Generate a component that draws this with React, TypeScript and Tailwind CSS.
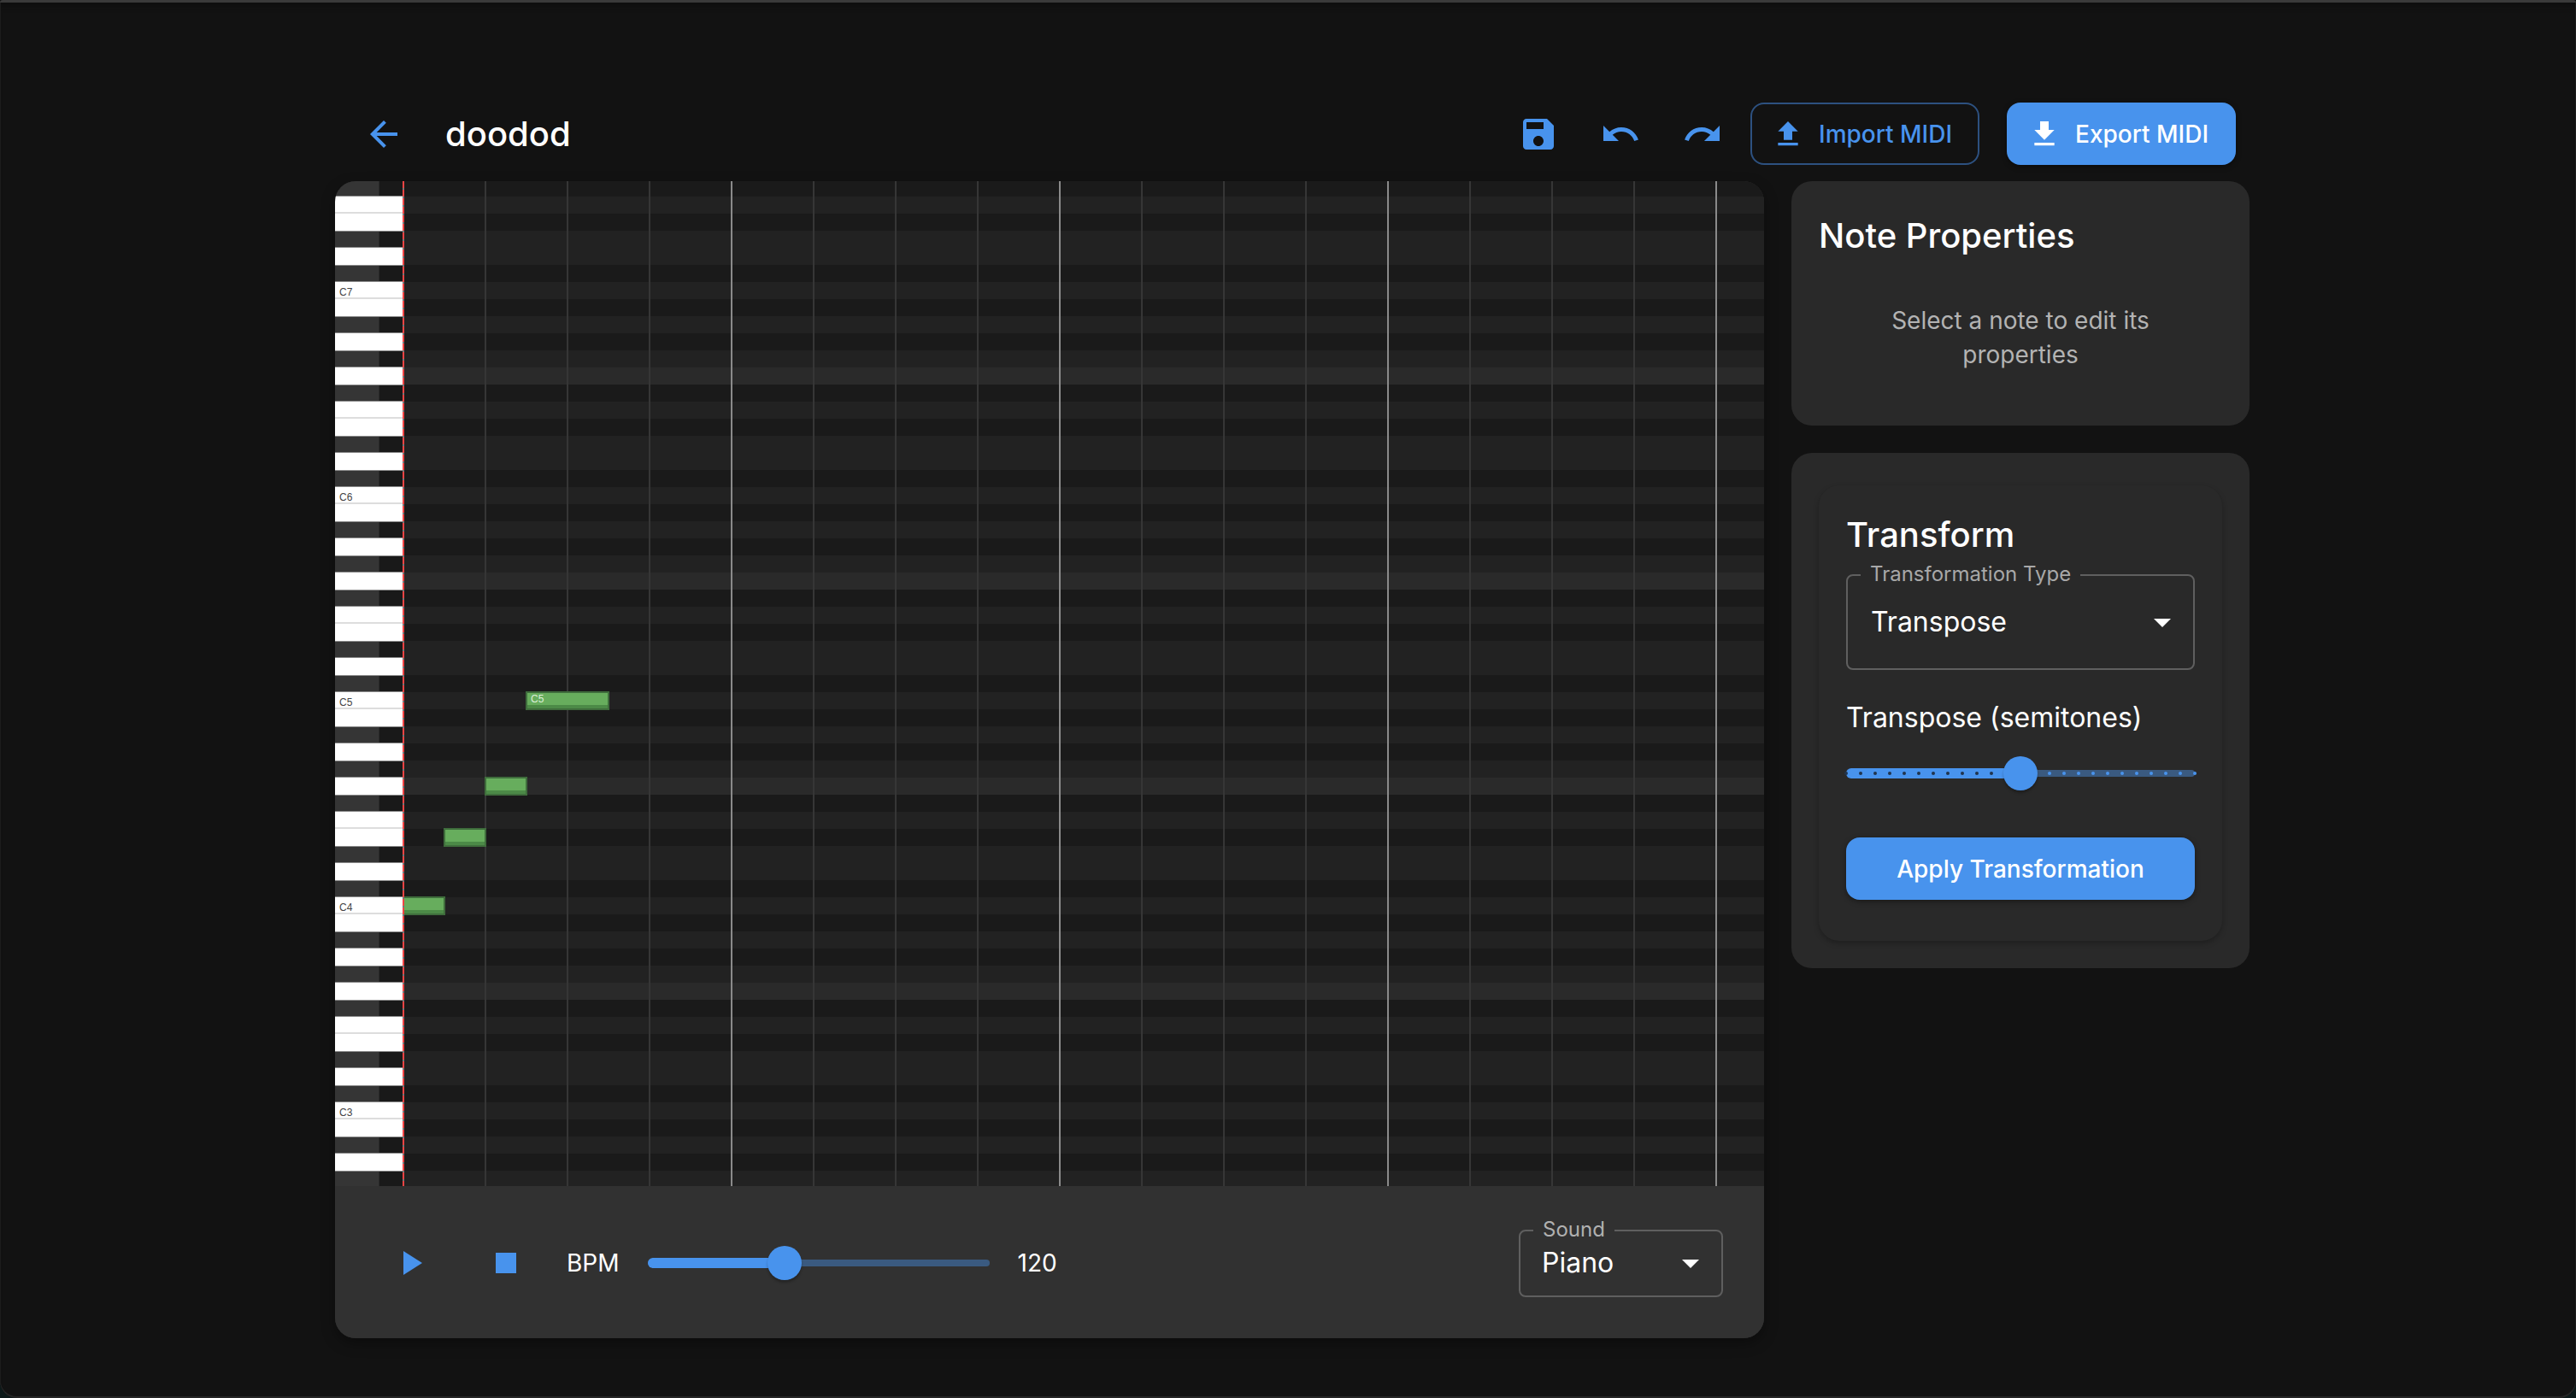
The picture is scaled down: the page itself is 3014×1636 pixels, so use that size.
import React from "react";

function Icon({ d, className = "w-[48px] h-[48px]" }: { d: string; className?: string }) {
  return (
    <svg viewBox="0 0 24 24" className={`shrink-0 ${className}`} fill="currentColor">
      <path d={d} />
    </svg>
  );
}

const P = {
  back: "M20 11H7.83l5.59-5.59L12 4l-8 8 8 8 1.41-1.41L7.83 13H20v-2z",
  save: "M17 3H5c-1.11 0-2 .9-2 2v14c0 1.1.89 2 2 2h14c1.1 0 2-.9 2-2V7l-4-4zm-5 16c-1.66 0-3-1.34-3-3s1.34-3 3-3 3 1.34 3 3-1.34 3-3 3zm3-10H5V5h10v4z",
  undo: "M12.5 8c-2.65 0-5.05.99-6.9 2.6L2 7v9h9l-3.62-3.62c1.39-1.16 3.16-1.88 5.12-1.88 3.54 0 6.55 2.31 7.6 5.5l2.37-.78C21.08 11.03 17.15 8 12.5 8z",
  redo: "M18.4 10.6C16.55 8.99 14.15 8 11.5 8c-4.65 0-8.58 3.03-9.96 7.22L3.9 16c1.05-3.19 4.05-5.5 7.6-5.5 1.95 0 3.73.72 5.12 1.88L13 16h9V7l-3.6 3.6z",
  upload: "M9 16h6v-6h4l-7-7-7 7h4zm-4 2h14v2H5z",
  download: "M19 9h-4V3H9v6H5l7 7 7-7zM5 18v2h14v-2H5z",
  play: "M8 5v14l11-7z",
  stop: "M6 6h12v12H6z",
  drop: "M7 10l5 5 5-5z",
};

function IconBtn({ d }: { d: string }) {
  return (
    <button className="w-[96px] h-[96px] flex items-center justify-center text-[#4893ed] shrink-0">
      <Icon d={d} />
    </button>
  );
}

const BLACK = [1, 3, 6, 8, 10];
// lane colours per pitch class
const LANE: Record<number, string> = {
  0: "bg-[#222222]",
  1: "bg-[#1a1a1a]",
  2: "bg-[#222222]",
  3: "bg-[#222222]",
  4: "bg-[#1a1a1a]",
  5: "bg-[#222222]",
  6: "bg-[#1a1a1a]",
  7: "bg-[#2a2a2a]",
  8: "bg-[#222222]",
  9: "bg-[#1a1a1a]",
  10: "bg-[#222222]",
  11: "bg-[#1a1a1a]",
};

function Row({ pitch }: { pitch: number }) {
  const pc = pitch % 12;
  const isBlack = BLACK.includes(pc);
  const label = pc === 0 ? `C${pitch / 12 - 1}` : "";
  const needsLine = pc === 0 || pc === 5;
  return (
    <div className="flex h-[20px] shrink-0">
      {isBlack ? (
        <div className="w-[80px] h-[20px] box-border bg-[#191919] border-y border-[#8a8a8a] flex shrink-0">
          <div className="w-[52px] h-full bg-[#353535] shadow-[inset_-1px_0_0_#2a2a2a]" />
        </div>
      ) : (
        <div
          className={`w-[80px] h-[20px] box-border bg-white shrink-0 pl-[5px] pt-[5px] flex items-center font-['Liberation_Sans',sans-serif] text-[12px] leading-none text-[#444444] ${
            needsLine ? "border-b-2 border-[#dddddd]" : ""
          }`}
        >
          {label}
        </div>
      )}
      <div className={`flex-1 ${LANE[pc]}`} />
    </div>
  );
}

const pitches = Array.from({ length: 60 }, (_, i) => 102 - i);
const gridLines = Array.from({ length: 16 }, (_, i) => i + 1);
const notes = [
  { x: 472, y: 1050, w: 48, label: "" },
  { x: 520, y: 970, w: 48, label: "" },
  { x: 568, y: 910, w: 48, label: "" },
  { x: 616, y: 810, w: 96, label: "C5" },
];

function PianoRoll() {
  return (
    <div className="relative h-[1176px] overflow-hidden">
      <div className="flex flex-col -mt-[2px]">
        {pitches.map((p) => (
          <Row key={p} pitch={p} />
        ))}
      </div>
      {gridLines.map((i) => (
        <div
          key={i}
          className={`absolute top-0 bottom-0 w-[2px] ${i % 4 === 0 ? "bg-[#8a8a8a]" : "bg-[#363636]"}`}
          style={{ left: 80 + i * 96 - 1 }}
        />
      ))}
      {notes.map((n) => (
        <div
          key={n.x}
          className="absolute h-[22px] box-border border-2 border-[#3f6d3c] bg-[#67ad5d] shadow-[inset_0_-4px_0_#4c8a47] text-[12px] leading-none text-[#dcefd9] font-['Liberation_Sans',sans-serif] pl-[4px] pt-[1px]"
          style={{ left: n.x - 1 - 392, top: n.y - 1 - 212, width: n.w + 2 }}
        >
          {n.label}
        </div>
      ))}
      <div className="absolute top-0 bottom-0 left-[79px] w-[2px] bg-[repeating-linear-gradient(to_bottom,#ef4444_0px,#ef4444_8px,#777777_8px,#777777_10px)]" />
    </div>
  );
}

function BpmSlider() {
  const pct = 0.4;
  return (
    <div className="relative w-[400px] h-[40px] shrink-0">
      <div className="absolute left-0 right-0 top-[16px] h-[8px] rounded-full bg-[#3a5a80]" />
      <div
        className="absolute left-0 top-[14px] h-[12px] rounded-full bg-[#4893ed]"
        style={{ width: `${pct * 100}%` }}
      />
      <div
        className="absolute top-0 w-[40px] h-[40px] rounded-full bg-[#4893ed] shadow-[0_3px_3px_rgba(0,0,0,0.25)] -translate-x-1/2"
        style={{ left: `${pct * 100}%` }}
      />
    </div>
  );
}

function TransposeSlider() {
  const marks = Array.from({ length: 25 }, (_, i) => i);
  return (
    <div className="relative w-[408px] h-[40px] mt-[21px]">
      <div className="absolute left-0 right-0 top-[16px] h-[8px] rounded-full bg-[#3a5a80]" />
      <div className="absolute left-0 top-[14px] h-[12px] w-[204px] rounded-full bg-[#4893ed]" />
      {marks.map((i) => (
        <div
          key={i}
          className={`absolute top-[18px] w-[4px] h-[4px] rounded-full ${i <= 12 ? "bg-[#20344d]" : "bg-[#4893ed]"}`}
          style={{ left: i * 17 - 2 }}
        />
      ))}
      <div className="absolute left-[204px] top-0 w-[40px] h-[40px] rounded-full bg-[#4893ed] shadow-[0_3px_3px_rgba(0,0,0,0.25)] -translate-x-1/2" />
    </div>
  );
}

function SoundSelect() {
  return (
    <div className="relative w-[239px] h-[79px] box-border border-2 border-[#5f5f5f] rounded-[8px] flex items-center pl-[26px] pr-[12px] shrink-0">
      <span className="absolute left-[15px] -top-[17px] px-[11px] bg-[#313131] text-[24px] leading-[30px] text-[#b0b0b0]">
        Sound
      </span>
      <span className="text-[32px] leading-[40px] text-white flex-1 -ml-[1px]">Piano</span>
      <Icon d={P.drop} className="w-[48px] h-[48px] text-white" />
    </div>
  );
}

function TypeSelect() {
  return (
    <div className="relative w-[408px] h-[112px] mt-[22px] box-border border-2 border-[#5f5f5f] rounded-[8px] flex items-center pl-[27px] pr-[12px]">
      <span className="absolute left-[15px] -top-[17px] px-[11px] bg-[#292929] text-[24px] leading-[30px] text-[#a8a8a8]">
        Transformation Type
      </span>
      <span className="text-[32px] leading-[40px] text-white flex-1">Transpose</span>
      <Icon d={P.drop} className="w-[48px] h-[48px] text-white" />
    </div>
  );
}

export default function App() {
  return (
    <div className="w-[3014px] h-[1636px] bg-[#0d1a1a] flex flex-col overflow-hidden font-['Inter',sans-serif] text-white">
      <div className="h-[3px] bg-[#111111] shrink-0">
        <div className="h-full rounded-t-[10px] bg-[#3a3a3a]" />
      </div>
      <div className="flex-1 bg-[#121212] rounded-b-[20px] shadow-[inset_0_-2px_0_#252525,inset_1px_0_0_#1d1d1d,inset_-1px_0_0_#1d1d1d,inset_0_8px_8px_-6px_#0c0c0c] pt-[117px] pl-[392px]">
        <header className="flex items-center h-[73px] w-[2224px] pl-[9px]">
          <IconBtn d={P.back} />
          <h1 className="ml-[24px] text-[40px] leading-[48px] font-medium text-white">doodod</h1>
          <div className="ml-auto flex items-center">
            <IconBtn d={P.save} />
            <IconBtn d={P.undo} />
            <IconBtn d={P.redo} />
            <button className="ml-[8px] w-[268px] h-[73px] box-border border-2 border-[#2d5180] rounded-[16px] flex items-center pl-[22px] gap-[16px] text-[#4893ed] text-[28px] font-medium">
              <Icon d={P.upload} className="w-[40px] h-[40px]" />
              Import MIDI
            </button>
            <button className="ml-[32px] w-[268px] h-[73px] bg-[#4893ed] rounded-[16px] flex items-center pl-[24px] gap-[16px] text-white text-[28px] font-medium shadow-[0_2px_6px_rgba(0,0,0,0.4)]">
              <Icon d={P.download} className="w-[40px] h-[40px]" />
              Export MIDI
            </button>
          </div>
        </header>

        <main className="flex gap-[32px] mt-[19px]">
          <section className="w-[1672px] rounded-[24px] overflow-hidden shadow-[0_6px_16px_rgba(0,0,0,0.35)] bg-[#313131]">
            <PianoRoll />
            <div className="h-[178px] box-border pt-[2px] flex items-center pl-[40px] pr-[48px] bg-[#313131]">
              <IconBtn d={P.play} />
              <div className="ml-[16px]">
                <IconBtn d={P.stop} />
              </div>
              <span className="ml-[23px] text-[28px] leading-[36px]">BPM</span>
              <div className="ml-[33px]">
                <BpmSlider />
              </div>
              <span className="ml-[33px] text-[28px] leading-[36px]">120</span>
              <div className="ml-auto">
                <SoundSelect />
              </div>
            </div>
          </section>

          <aside className="w-[536px] flex flex-col gap-[32px]">
            <div className="h-[286px] rounded-[24px] bg-[#292929] px-[32px] pt-[40px]">
              <h2 className="text-[40px] leading-[48px] font-medium">Note Properties</h2>
              <p className="mt-[55px] text-[28px] leading-[40px] text-[#b3b3b3] text-center">
                Select a note to edit its
                <br />
                properties
              </p>
            </div>
            <div className="h-[603px] rounded-[24px] bg-[#292929] px-[32px] pt-[38px]">
              <div className="h-[533px] rounded-[24px] bg-[#292929] shadow-[0_3px_6px_rgba(0,0,0,0.25)] px-[32px] pt-[34px]">
                <h3 className="text-[40px] leading-[48px] font-medium">Transform</h3>
                <TypeSelect />
                <div className="mt-[32px] text-[32px] leading-[48px]">Transpose (semitones)</div>
                <TransposeSlider />
                <button className="mt-[55px] w-[408px] h-[73px] bg-[#4893ed] rounded-[16px] text-white text-[28px] font-medium shadow-[0_2px_6px_rgba(0,0,0,0.4)]">
                  Apply Transformation
                </button>
              </div>
            </div>
          </aside>
        </main>
      </div>
    </div>
  );
}
